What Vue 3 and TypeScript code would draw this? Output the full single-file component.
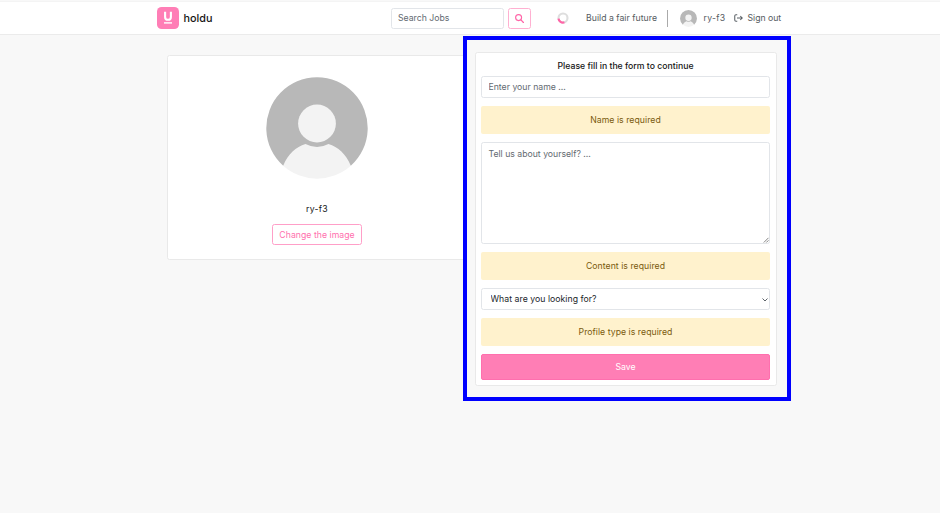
<script setup lang="ts">
import { ref } from 'vue'

const search = ref('')
const name = ref('')
const content = ref('')
const profileType = ref('')
</script>

<template>
  <div class="page">
    <header class="navbar">
      <a class="brand">
        <svg class="logo" viewBox="0 0 22 22">
          <rect width="22" height="22" rx="4.6" fill="#ff7eb6" />
          <path d="M8.1 4.8v5.1a2.9 2.9 0 0 0 5.8 0V4.8" fill="none" stroke="#fff" stroke-width="2.1" />
          <path d="M7 15.9h8" stroke="#fff" stroke-width="1.4" />
        </svg>
        <span class="brand-name">holdu</span>
      </a>
      <form class="search" @submit.prevent>
        <input v-model="search" class="field search-field" placeholder="Search Jobs" />
        <button class="search-btn" aria-label="Search">
          <svg viewBox="0 0 16 16" width="9" height="9">
            <circle cx="6.4" cy="6.4" r="5.3" fill="none" stroke="#ff64a7" stroke-width="2" />
            <path d="M10.5 10.5 15 15" stroke="#ff64a7" stroke-width="2.3" stroke-linecap="round" />
          </svg>
        </button>
      </form>
      <svg class="ring" viewBox="0 0 12 12">
        <circle cx="6" cy="6" r="4.5" fill="none" stroke="#dedede" stroke-width="2.1" />
        <path d="M7.4 10.300A4.500 4.500 0 0 1 1.500 6.600" fill="none" stroke="#ff64a7" stroke-width="2.2" />
      </svg>
      <span class="motto">Build a fair future</span>
      <i class="divider"></i>
      <svg class="avatar-small" viewBox="0 0 102 102">
        <path d="M17.200 88.500A50.700 50.700 0 1 1 84.800 88.500L51 75Z" fill="#b8b8b8" />
        <circle cx="51" cy="46.500" r="19" fill="#f3f3f3" />
        <path d="M17.200 88.500C22 77 30 70 39.500 67q11.500 6 23 0C72 70 80 77 84.800 88.500A50.700 50.700 0 0 1 17.200 88.500Z" fill="#f3f3f3" />
      </svg>
      <span class="user">ry-f3</span>
      <a class="signout">
        <svg viewBox="0 0 18 16" width="9" height="8">
          <path d="M6.500 1.500H4Q1.500 1.500 1.500 4v8q0 2.500 2.500 2.500h2.500M6 8h10.500M12.500 4l4 4-4 4" fill="none" stroke="#5a6066" stroke-width="2.100" />
        </svg>
        <span class="signout-text">Sign out</span>
      </a>
    </header>

    <main class="content">
      <section class="card profile">
        <svg class="avatar" viewBox="0 0 102 102">
          <path d="M17.200 88.800A50.700 50.700 0 1 1 84.800 88.800L51 75Z" fill="#b8b8b8" />
          <circle cx="51" cy="46.500" r="18.900" fill="#f3f3f3" />
          <path d="M17.200 88.800C22 77 30 70 39.500 67q11.500 6 23 0C72 70 80 77 84.800 88.800A50.700 50.700 0 0 1 17.200 88.800Z" fill="#f3f3f3" />
        </svg>
        <p class="profile-name">ry-f3</p>
        <button class="change-btn">Change the image</button>
      </section>

      <div class="highlight">
        <form class="card form" @submit.prevent>
          <p class="title"><span>Please fill in the form to continue</span></p>
          <input v-model="name" class="field name-field" placeholder="Enter your name ..." />
          <div class="alert a-name">Name is required</div>
          <div class="about-wrap">
            <textarea v-model="content" class="field about" placeholder="Tell us about yourself? ..."></textarea>
            <svg class="grip" viewBox="0 0 6 6">
              <path d="M.8 5.500 5.500.8M3.300 5.500 5.500 3.300" stroke="#777" stroke-width=".9" />
            </svg>
          </div>
          <div class="alert a-content">Content is required</div>
          <div class="select-wrap">
            <select v-model="profileType" class="field select">
              <option value="">What are you looking for?</option>
            </select>
            <svg class="chevron" viewBox="0 0 8 6">
              <path d="M1.500 1.500 4 4l2.500-2.500" fill="none" stroke="#5d6369" stroke-width="1" />
            </svg>
          </div>
          <div class="alert a-type">Profile type is required</div>
          <button class="save">Save</button>
        </form>
      </div>
    </main>
  </div>
</template>

<style>
body {
  background: #fff;
  overflow: hidden;
}
</style>

<style scoped>
.page,
.page * {
  box-sizing: border-box;
}
.page {
  width: 940px;
  height: 513px;
  background: #f8f8f8;
  padding-top: 1px;
  font-family: Inter, 'Open Sans', sans-serif;
  font-size: 8.7px;
  color: #212529;
}
input,
textarea,
select,
button {
  font: inherit;
  letter-spacing: inherit;
  margin: 0;
  outline: none;
}
p {
  margin: 0;
}
svg {
  display: block;
  flex: none;
}
.navbar {
  height: 34px;
  background: #fff;
  border-top: 1px solid #f4f4f4;
  border-bottom: 1px solid #ebebeb;
  padding-left: 157px;
  display: flex;
  align-items: center;
  color: #555b61;
  white-space: nowrap;
}
.brand {
  display: flex;
  align-items: center;
  width: 233.500px;
}
.logo {
  width: 22px;
  height: 22px;
}
.brand-name {
  margin-left: 4.500px;
  font-size: 10.800px;
  font-weight: 500;
  color: #151515;
}
.search {
  display: flex;
  width: 166.500px;
}
.field {
  border: 1px solid #e2e5e9;
  border-radius: 2.500px;
  background: #fff;
  color: #212529;
  padding: 0 6.500px;
}
.field::placeholder {
  color: #636a71;
  opacity: 1;
}
.search-field {
  width: 113px;
  height: 21px;
}
.search-btn {
  width: 23.500px;
  height: 21px;
  margin-left: 4px;
  padding: 0;
  border: 1px solid #ffb0d1;
  border-radius: 2.500px;
  background: #fff;
  display: flex;
  align-items: center;
  justify-content: center;
}
.ring {
  width: 12px;
  height: 12px;
}
.motto {
  width: 81px;
  margin-left: 17px;
  letter-spacing: 0.030px;
}
.divider {
  width: 1px;
  height: 17px;
  background: #aaa;
}
.avatar-small {
  width: 17px;
  height: 17px;
  margin-left: 12px;
}
.user {
  width: 30.500px;
  margin-left: 6.500px;
  letter-spacing: 0.300px;
}
.signout {
  display: flex;
  align-items: center;
  gap: 4.500px;
}
.signout-text {
  letter-spacing: -0.020px;
}
.content {
  display: flex;
  align-items: flex-start;
  padding-left: 167px;
}
.card {
  background: #fff;
  border: 1px solid #e9e9e9;
  border-radius: 2.500px;
  display: flex;
  flex-direction: column;
}
.profile {
  width: 300px;
  height: 205px;
  margin-top: 20px;
  align-items: center;
  padding-top: 21px;
}
.avatar {
  width: 102px;
  height: 102px;
}
.profile-name {
  margin-top: 23px;
  line-height: 14px;
  color: #151515;
  letter-spacing: 0.300px;
}
.change-btn {
  width: 90px;
  height: 21px;
  margin-top: 8px;
  padding: 0;
  border: 1px solid #ff9fc8;
  border-radius: 2.500px;
  background: #fff;
  color: #ff6fae;
  letter-spacing: 0.030px;
}
.highlight {
  width: 328px;
  height: 365px;
  margin: 1px 0 0 -4px;
  border: 4px solid #00f;
  background: #f8f8f8;
  padding: 12px 10px 0 8px;
  position: relative;
}
.form {
  width: 302px;
  height: 334px;
  padding: 5px 6px 5px 5px;
}
.title {
  height: 18px;
  line-height: 16px;
  text-align: center;
  color: #151515;
  font-weight: 500;
}
.name-field {
  height: 22px;
  flex: none;
}
.alert {
  height: 28px;
  line-height: 28px;
  flex: none;
  margin: 8px 0;
  border-radius: 2px;
  background: #fff2cd;
  color: #7a5a0d;
  text-align: center;
  letter-spacing: 0.040px;
}
.about-wrap {
  position: relative;
  height: 102px;
  flex: none;
}
.field.about {
  display: block;
  width: 100%;
  height: 102px;
  padding: 4.500px 6.500px;
  line-height: 12px;
  resize: none;
}
.grip {
  position: absolute;
  right: 1px;
  bottom: 1.500px;
  width: 6px;
  height: 6px;
}
.select-wrap {
  position: relative;
  height: 22px;
  flex: none;
}
.field.select {
  appearance: none;
  width: 100%;
  height: 22px;
  padding: 0 8.500px;
  letter-spacing: 0.040px;
}
.chevron {
  position: absolute;
  right: 1.500px;
  top: 8.500px;
  width: 8px;
  height: 6px;
  pointer-events: none;
}
.save {
  height: 26px;
  flex: none;
  border: 1px solid #ff6fae;
  border-radius: 2px;
  background: #ff7eb5;
  color: #fff;
}
</style>
